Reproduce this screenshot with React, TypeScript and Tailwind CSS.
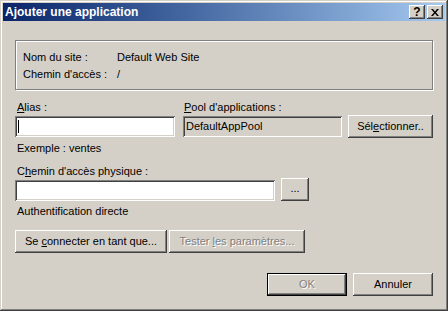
import React from 'react';

const btn =
  'bg-[#d4d0c8] shadow-[inset_-1px_-1px_#404040,inset_1px_1px_#ffffff,inset_-2px_-2px_#808080,inset_2px_2px_#d4d0c8] flex items-center justify-center';
const field =
  'shadow-[inset_1px_1px_#808080,inset_-1px_-1px_#ffffff,inset_2px_2px_#404040,inset_-2px_-2px_#d4d0c8]';
const disabledText = 'text-[#808080] [text-shadow:1px_1px_#ffffff]';

export default function App() {
  return (
    <div
      className="w-[448px] h-[311px] bg-[#d4d0c8] p-[3px] flex flex-col text-[11px] leading-[13px] text-black shadow-[inset_-1px_-1px_#404040,inset_1px_1px_#d4d0c8,inset_-2px_-2px_#808080,inset_2px_2px_#ffffff]"
      style={{ fontFamily: '"Liberation Sans", Arial, sans-serif' }}
    >
      {/* Title bar */}
      <div className="h-[18px] bg-gradient-to-r from-[#0a246a] to-[#a6caf0] flex items-center pl-[2px] pr-[2px]">
        <span className="text-white font-bold text-[12px] leading-[14px] flex-1">Ajouter une application</span>
        <div className={`${btn} w-[16px] h-[14px] font-bold text-[12px] leading-[12px]`}>?</div>
        <div className={`${btn} w-[16px] h-[14px] ml-[2px]`}>
          <svg width="8" height="7" viewBox="0 0 8 7">
            <path d="M0 0h2l2 2.5 2-2.5h2L5 3.5 8 7H6L4 4.5 2 7H0l3-3.5z" fill="#000" />
          </svg>
        </div>
      </div>

      <div className="px-[12px] flex flex-col">
        {/* Site group */}
        <div className="mt-[19px] h-[50px] border border-[#808080] shadow-[inset_1px_1px_#ffffff,1px_1px_#ffffff] pl-[7px] pt-[10px] flex flex-col gap-[4px]">
          <div className="flex">
            <span className="w-[94px]">Nom du site :</span>
            <span>Default Web Site</span>
          </div>
          <div className="flex">
            <span className="w-[94px]">Chemin d'accès :</span>
            <span>/</span>
          </div>
        </div>

        {/* Alias / Pool */}
        <div className="mt-[11px] flex items-start">
          <div className="w-[160px] flex flex-col">
            <span className="pl-[2px]">
              <u>A</u>lias :
            </span>
            <div className={`${field} bg-white h-[21px] mt-[2px] relative`}>
              <span className="absolute left-[3px] top-[4px] w-px h-[13px] bg-black" />
            </div>
          </div>
          <div className="w-[159px] ml-[8px] flex flex-col">
            <span className="pl-[1px]">
              <u>P</u>ool d'applications :
            </span>
            <div className={`${field} h-[21px] mt-[2px] flex items-center pl-[3px]`}>DefaultAppPool</div>
          </div>
          <div className={`${btn} w-[85px] h-[23px] mt-[14px] ml-[6px]`}>
            <span>
              Sél<u>e</u>ctionner..
            </span>
          </div>
        </div>

        <span className="mt-[4px] pl-[2px]">Exemple : ventes</span>

        <span className="mt-[10px] pl-[2px]">
          C<u>h</u>emin d'accès physique :
        </span>
        <div className="flex items-end">
          <div className={`${field} bg-white h-[21px] w-[260px]`} />
          <div className={`${btn} w-[28px] h-[23px] ml-[6px] pb-[2px]`}>...</div>
        </div>

        <span className="mt-[4px] pl-[2px]">Authentification directe</span>

        <div className="mt-[12px] flex">
          <div className={`${btn} w-[152px] h-[23px]`}>
            <span>
              Se <u>c</u>onnecter en tant que...
            </span>
          </div>
          <div className={`${btn} w-[136px] h-[23px] ml-[2px] ${disabledText}`}>
            <span>
              Tester <u>l</u>es paramètres...
            </span>
          </div>
        </div>

        <div className="mt-[20px] flex justify-end gap-[6px]">
          <div className="w-[80px] h-[23px] border border-black flex">
            <div className={`${btn} flex-1 ${disabledText}`}>OK</div>
          </div>
          <div className={`${btn} w-[80px] h-[23px]`}>Annuler</div>
        </div>
      </div>
    </div>
  );
}
